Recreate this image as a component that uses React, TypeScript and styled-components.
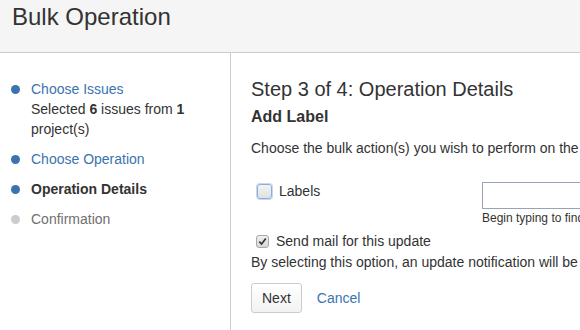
import React from 'react';
import styled, { createGlobalStyle } from 'styled-components';

const GlobalStyle = createGlobalStyle`
  html, body {
    margin: 0;
    padding: 0;
    background: #fff;
  }
  body {
    font-family: 'Liberation Sans', Arial, sans-serif;
    font-size: 14px;
    color: #333;
    overflow: hidden;
  }
`;

const Page = styled.div`
  width: 580px;
  height: 330px;
  display: flex;
  flex-direction: column;
`;

const Header = styled.header`
  height: 53px;
  box-sizing: border-box;
  background: #f5f5f5;
  border-bottom: 1px solid #ccc;
  padding: 4px 0 0 12px;

  h1 {
    margin: 0;
    font-size: 24px;
    font-weight: normal;
    line-height: 26px;
    color: #333;
  }
`;

const Body = styled.div`
  flex: 1;
  display: flex;
`;

const Sidebar = styled.nav`
  width: 230px;
  flex-shrink: 0;
  border-right: 1px solid #ccc;
  padding-top: 26px;
`;

const Steps = styled.ol`
  list-style: none;
  margin: 0;
  padding: 0;
`;

const Step = styled.li<{ $state: 'done' | 'current' | 'todo' }>`
  position: relative;
  padding-left: 31px;
  margin-bottom: 10px;
  line-height: 20px;

  &::before {
    content: '';
    position: absolute;
    left: 11px;
    top: 6px;
    width: 9px;
    height: 9px;
    border-radius: 50%;
    background: ${(p) => (p.$state === 'todo' ? '#ccc' : '#3b73af')};
  }

  .title {
    color: ${(p) =>
      p.$state === 'done' ? '#3b73af' : p.$state === 'current' ? '#333' : '#707070'};
    font-weight: ${(p) => (p.$state === 'current' ? 'bold' : 'normal')};
  }
`;

const Summary = styled.div`
  color: #333;
  width: 185px;
`;

const Main = styled.main`
  flex: 1;
  padding: 1px 0 0 20px;
  white-space: nowrap;
  overflow: hidden;
`;

const Title = styled.h2`
  margin: 23px 0 0;
  font-size: 20px;
  font-weight: normal;
  line-height: 24px;
`;

const SubTitle = styled.h3`
  margin: 6px 0 0;
  font-size: 16px;
  font-weight: bold;
  line-height: 20px;
`;

const Intro = styled.p`
  margin: 11px 0 0;
  line-height: 20px;
`;

const FieldRow = styled.div`
  display: grid;
  grid-template-columns: 231px 1fr;
  margin-top: 23px;
`;

const CheckLabel = styled.label<{ $indent: number }>`
  display: flex;
  align-items: center;
  gap: 7px;
  padding-left: ${(p) => p.$indent}px;
  height: 20px;
`;

const Box = styled.span<{ $checked?: boolean }>`
  display: inline-flex;
  align-items: center;
  justify-content: center;
  box-sizing: border-box;
  width: ${(p) => (p.$checked ? 13 : 15)}px;
  height: ${(p) => (p.$checked ? 13 : 15)}px;
  border-radius: 3px;
  border: 1px solid ${(p) => (p.$checked ? '#a8a8a8' : '#8aaede')};
  background: ${(p) =>
    p.$checked ? 'linear-gradient(#f0f0f0, #d8d8d8)' : 'linear-gradient(#f4f4f4, #e0e0e0)'};
  box-shadow: ${(p) => (p.$checked ? 'none' : '0 0 0 1px #c7d9f1')};
`;

const Field = styled.div`
  display: flex;
  flex-direction: column;
`;

const TextInput = styled.input`
  box-sizing: border-box;
  width: 200px;
  height: 27px;
  margin-top: 1px;
  border: 1px solid #98a3b3;
  padding: 0 5px;
  font-family: inherit;
  font-size: 14px;
  outline: none;
`;

const Hint = styled.div`
  font-size: 12px;
  line-height: 16px;
  margin-top: 1px;
  color: #333;
`;

const MailRow = styled.div`
  margin-top: 5px;
`;

const Note = styled.p`
  margin: 1px 0 0;
  line-height: 20px;
`;

const Actions = styled.div`
  display: flex;
  align-items: center;
  gap: 15px;
  margin-top: 11px;
`;

const Button = styled.button`
  box-sizing: border-box;
  height: 30px;
  padding: 0 10px;
  border: 1px solid #ccc;
  border-radius: 3px;
  background: linear-gradient(#fff, #f2f2f2);
  font-family: inherit;
  font-size: 14px;
  color: #333;
`;

const CancelLink = styled.a`
  color: #3b73af;
  text-decoration: none;
`;

export default function App() {
  return (
    <Page>
      <GlobalStyle />
      <Header>
        <h1>Bulk Operation</h1>
      </Header>
      <Body>
        <Sidebar>
          <Steps>
            <Step $state="done">
              <div className="title">Choose Issues</div>
              <Summary>
                Selected <b>6</b> issues from <b>1</b> project(s)
              </Summary>
            </Step>
            <Step $state="done">
              <div className="title">Choose Operation</div>
            </Step>
            <Step $state="current">
              <div className="title">Operation Details</div>
            </Step>
            <Step $state="todo">
              <div className="title">Confirmation</div>
            </Step>
          </Steps>
        </Sidebar>
        <Main>
          <Title>Step 3 of 4: Operation Details</Title>
          <SubTitle>Add Label</SubTitle>
          <Intro>Choose the bulk action(s) you wish to perform on the selected 6 issue(s).</Intro>
          <FieldRow>
            <CheckLabel $indent={6}>
              <Box />
              Labels
            </CheckLabel>
            <Field>
              <TextInput />
              <Hint>Begin typing to find and create labels or press down to select a suggested label.</Hint>
            </Field>
          </FieldRow>
          <MailRow>
            <CheckLabel $indent={5}>
              <Box $checked>
                <svg width="9" height="9" viewBox="0 0 9 9">
                  <path d="M1.3 4.6 L3.6 7 L7.8 1.6" fill="none" stroke="#333" strokeWidth="1.7" />
                </svg>
              </Box>
              Send mail for this update
            </CheckLabel>
          </MailRow>
          <Note>
            By selecting this option, an update notification will be sent to the users involved.
          </Note>
          <Actions>
            <Button>Next</Button>
            <CancelLink href="#">Cancel</CancelLink>
          </Actions>
        </Main>
      </Body>
    </Page>
  );
}
